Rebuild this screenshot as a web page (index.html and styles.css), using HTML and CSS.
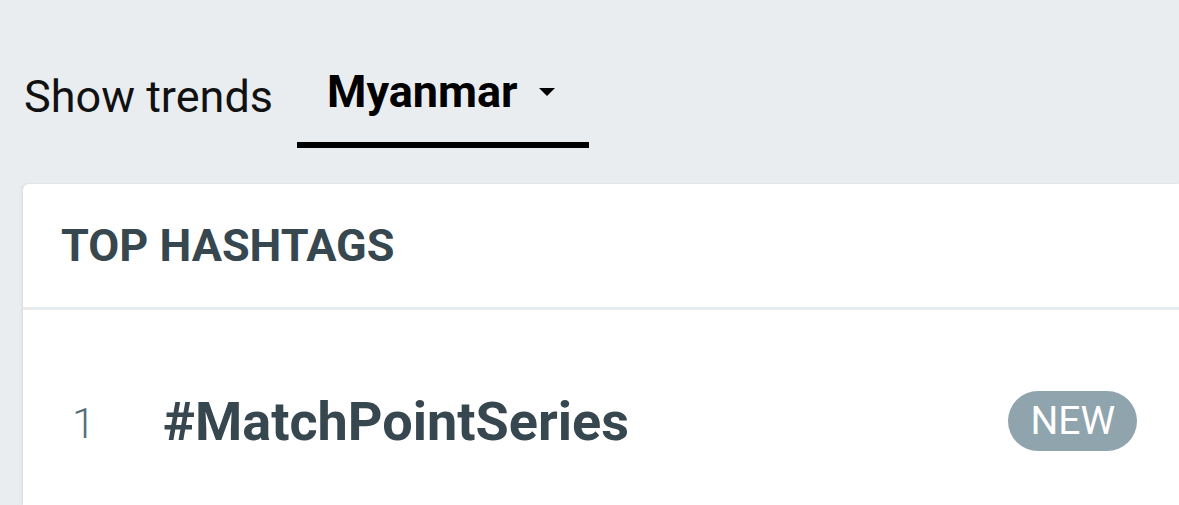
FILE: index.html
```html
<html>
<head>
    <link rel="stylesheet" href="styles.css">
</head>
<body>
    <div class="trends-bar">
        <span class="trends-label">Show trends</span>
        <div class="country-select">
            <span class="country-name">Myanmar</span>
            <span class="caret"></span>
        </div>
    </div>

    <div class="card">
        <div class="card-header">TOP HASHTAGS</div>
        <div class="trend-row">
            <span class="rank">1</span>
            <span class="hashtag">#MatchPointSeries</span>
            <span class="badge">NEW</span>
        </div>
    </div>
</body>
</html>
```

FILE: styles.css
```css
body {
    margin: 0;
    background-color: #e9edf0;
    font-family: Roboto, "Noto Sans", sans-serif;
    overflow: hidden;
}
.trends-bar {
    display: flex;
    align-items: flex-start;
    padding: 64px 0 0 24px;
    height: 148px;
    box-sizing: border-box;
}
.trends-label {
    font-size: 45px;
    color: #111;
    line-height: 50px;
    margin-top: 8px;
}
.country-select {
    display: flex;
    align-items: flex-start;
    margin-left: 24px;
    width: 292px;
    height: 84px;
    box-sizing: border-box;
    padding: 3px 0 0 30px;
    border-bottom: 6px solid #000;
}
.country-name {
    font-size: 45px;
    font-weight: bold;
    color: #000;
    line-height: 50px;
}
.caret {
    width: 0;
    height: 0;
    border-left: 8px solid transparent;
    border-right: 8px solid transparent;
    border-top: 8px solid #000;
    margin-left: 21px;
    margin-top: 21px;
}
.card {
    margin: 36px 0 0 23px;
    background: #fff;
    border-radius: 6px 0 0 0;
    box-shadow: -1px 0 3px rgba(0, 0, 0, 0.08);
    height: 321px;
}
.card-header {
    height: 123px;
    display: flex;
    align-items: center;
    padding-left: 38px;
    font-size: 45px;
    font-weight: bold;
    color: #37474f;
    border-bottom: 3px solid #e8ebee;
}
.trend-row {
    display: flex;
    align-items: flex-start;
    padding: 82px 42px 0 49px;
}
.rank {
    font-size: 42px;
    font-weight: 300;
    color: #546e7a;
    width: 91px;
    line-height: 60px;
    margin-top: 2px;
}
.hashtag {
    font-size: 54px;
    font-weight: bold;
    color: #37474f;
    flex: 1;
    line-height: 60px;
}
.badge {
    background: #90a4ae;
    color: #fff;
    font-size: 39px;
    height: 60px;
    line-height: 60px;
    padding: 0 22px;
    border-radius: 30px;
    margin-top: -1px;
}
```
